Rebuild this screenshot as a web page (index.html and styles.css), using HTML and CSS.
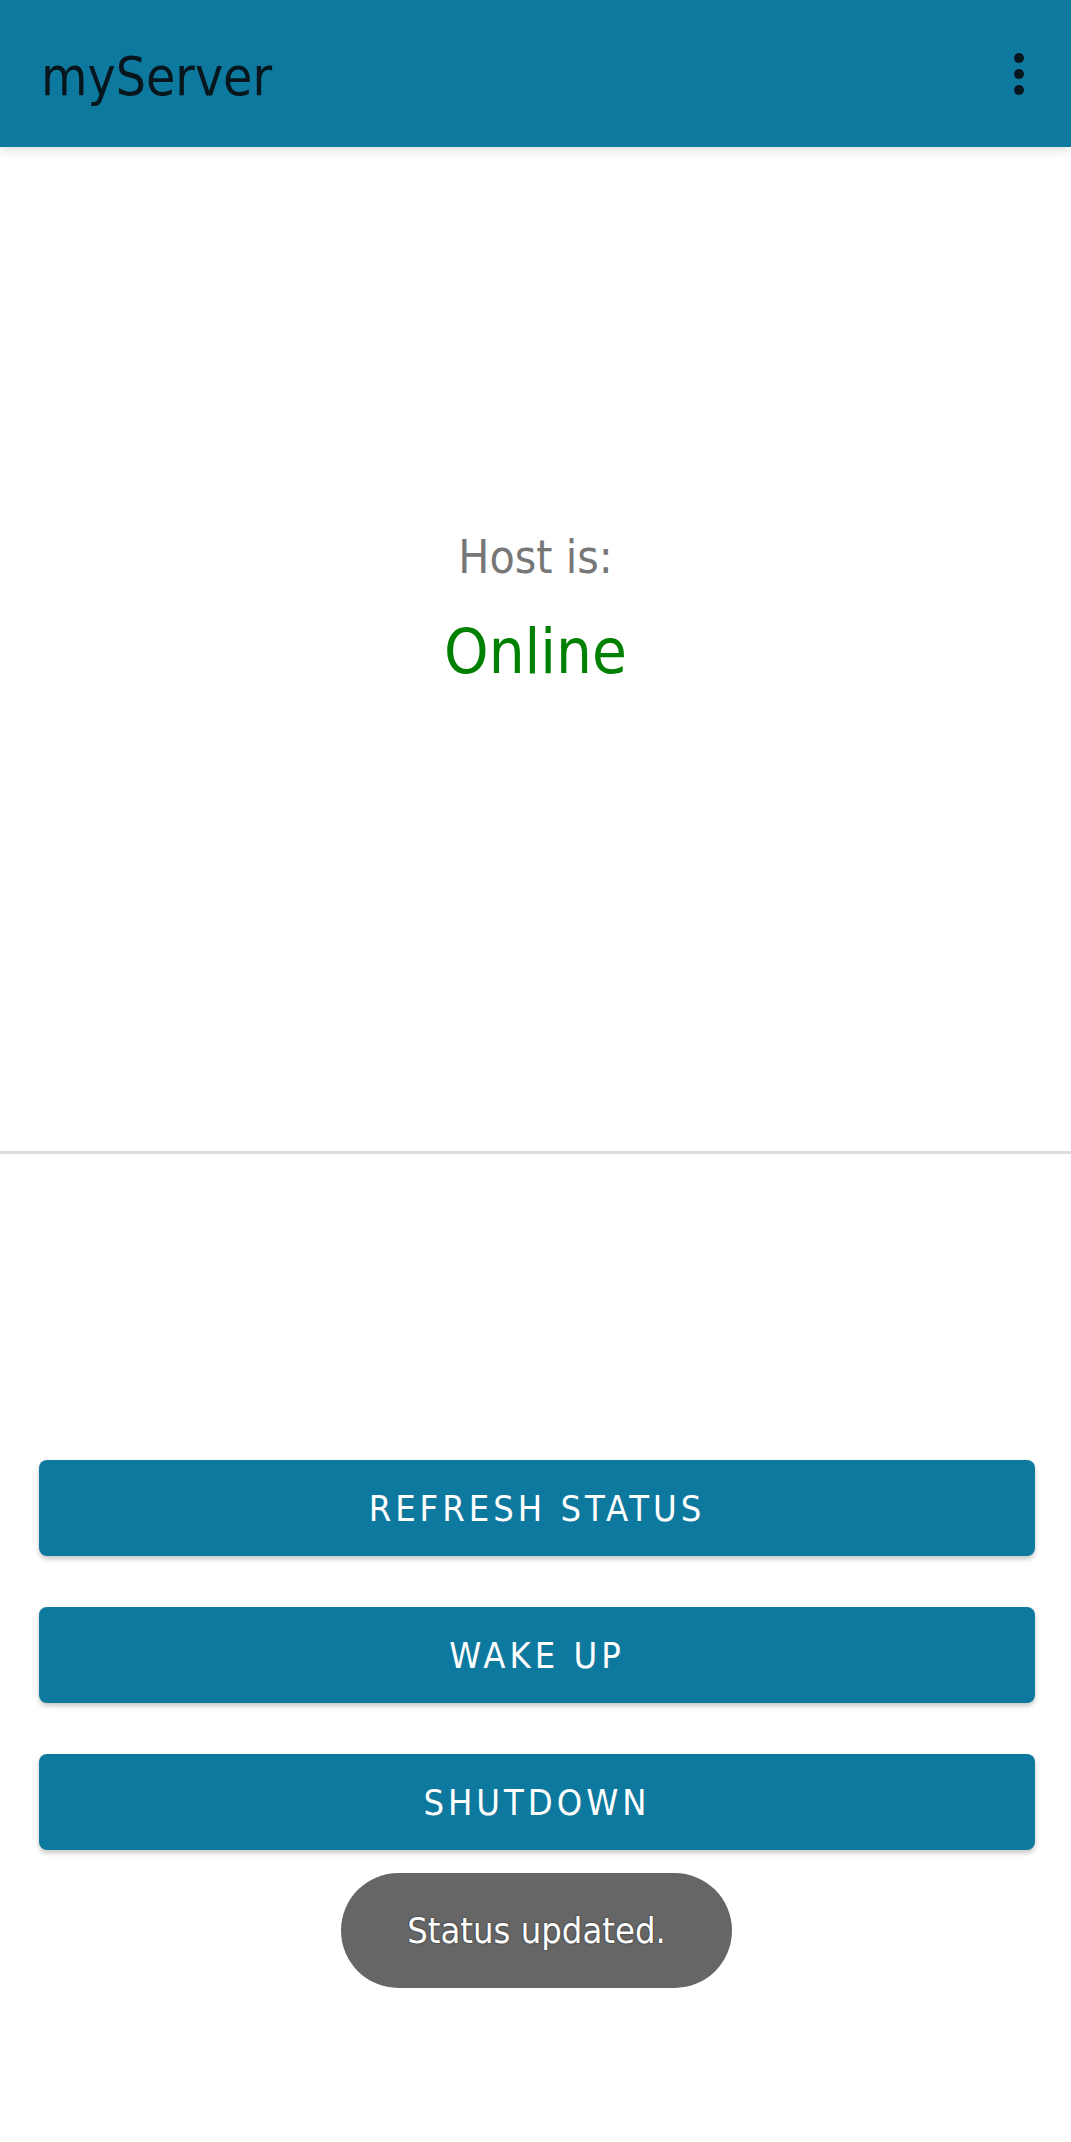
FILE: index.html
```html
<!DOCTYPE html>
<html lang="en">
<head>
<meta charset="utf-8">
<title>myServer</title>
<link rel="stylesheet" href="styles.css">
</head>
<body>
<div class="app">
  <header class="appbar">
    <h1 class="appbar-title">myServer</h1>
    <button class="overflow" aria-label="More options">
      <svg width="12" height="44" viewBox="0 0 12 44">
        <circle cx="6" cy="6" r="5"/>
        <circle cx="6" cy="22" r="5"/>
        <circle cx="6" cy="38" r="5"/>
      </svg>
    </button>
  </header>
  <section class="status">
    <div class="status-label">Host is:</div>
    <div class="status-value">Online</div>
  </section>
  <hr class="divider">
  <section class="actions">
    <button class="action">REFRESH STATUS</button>
    <button class="action">WAKE UP</button>
    <button class="action">SHUTDOWN</button>
  </section>
  <div class="toast">Status updated.</div>
</div>
</body>
</html>
```
FILE: styles.css
```css
html, body {
  margin: 0;
  padding: 0;
  background: #ffffff;
}
body {
  font-family: "DejaVu Sans Condensed", "DejaVu Sans", sans-serif;
  font-stretch: semi-condensed;
}
.app {
  position: relative;
  width: 1071px;
  height: 2142px;
  overflow: hidden;
  background: #ffffff;
}
.appbar {
  position: relative;
  z-index: 2;
  height: 147px;
  background: #0e799e;
  display: flex;
  align-items: center;
  justify-content: space-between;
  padding: 0 46px 0 41px;
  box-sizing: border-box;
  box-shadow: 0 3px 10px rgba(0, 0, 0, 0.14);
}
.appbar-title {
  margin: 0;
  padding-top: 6px;
  font-size: 53px;
  font-weight: normal;
  color: #07161c;
  line-height: 60px;
}
.overflow {
  border: 0;
  background: none;
  padding: 0;
  display: flex;
  fill: #07161c;
}
.status {
  height: 1004px;
  box-sizing: border-box;
  padding-top: 380px;
  text-align: center;
}
.status-label {
  font-size: 46px;
  line-height: 60px;
  color: #777777;
}
.status-value {
  margin-top: 25px;
  font-size: 63px;
  line-height: 80px;
  color: #008000;
}
.divider {
  margin: 0;
  border: 0;
  height: 3px;
  background: #dedede;
}
.actions {
  padding: 306px 36px 0 39px;
  display: flex;
  flex-direction: column;
  gap: 51px;
}
.action {
  height: 96px;
  border: 0;
  border-radius: 8px;
  background: #0e799e;
  color: #ffffff;
  font-family: "DejaVu Sans Condensed", "DejaVu Sans", sans-serif;
  font-stretch: semi-condensed;
  font-size: 36px;
  letter-spacing: 4px;
  display: flex;
  align-items: center;
  justify-content: center;
  box-shadow: 0 3px 5px rgba(0, 0, 0, 0.22);
}
.toast {
  position: absolute;
  left: 341px;
  top: 1873px;
  width: 391px;
  height: 115px;
  border-radius: 58px;
  background: #666666;
  color: #ffffff;
  font-size: 36px;
  display: flex;
  align-items: center;
  justify-content: center;
  text-shadow: 0 0 2px rgba(0, 0, 0, 0.7);
}
```
